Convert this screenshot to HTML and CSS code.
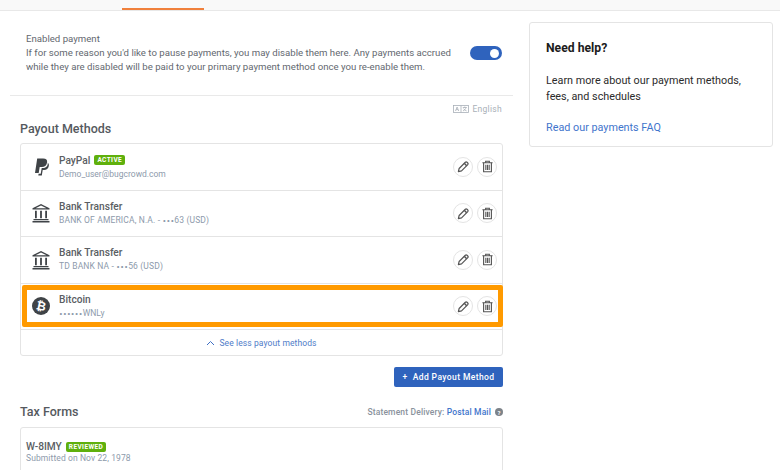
FILE: index.html
```html
<!DOCTYPE html>
<html lang="en">
<head>
  <meta charset="UTF-8">
  <title>Payments</title>
  <link rel="stylesheet" href="styles.css">
</head>
<body>
  <div class="tabs"><span class="tab-active"></span></div>
  <div class="page">
    <main class="main">
      <section class="enable">
        <div class="enable-text">
          <div>Enabled payment</div>
          <p>If for some reason you'd like to pause payments, you may disable them here. Any payments accrued while they are disabled will be paid to your primary payment method once you re-enable them.</p>
        </div>
        <div class="toggle"><span class="knob"></span></div>
      </section>

      <div class="lang">
        <svg width="16" height="8" viewBox="0 0 16 8" fill="none" stroke="#a9b0b8" stroke-width="0.8"><rect x="0.5" y="0.5" width="15" height="7"/><path d="M8 0.5v7M2.5 6l1.6-4 1.6 4M3.2 4.6h1.8M9.8 2.5h4M11.8 1.5v1M13 2.5c-.4 1.6-1.5 2.8-3 3.4M10.6 3.6c.6 1 1.6 1.9 3 2.3"/></svg>
        English
      </div>
      <h2 class="section-title">Payout Methods</h2>

      <div class="card">
        <div class="row">
          <svg class="row-icon" width="24" height="24" viewBox="0 0 24 24" fill="#3f4347"><path d="M8.200 3.500h6c2.900 0 4.400 1.500 3.900 4.100-.5 3-2.600 4.500-5.200 4.500h-2.200l-1 5.800H6z"/><path d="M18.800 7.800c1 .8 1.300 1.900 1 3.300-.5 2.600-2.300 4-4.700 4h-1.400l-.9 5.400H9.300l.3-1.700h2.100l1-5.700h1.300c2.700 0 4.900-1.600 4.800-5.300z"/></svg>
          <div class="row-text">
            <div class="row-name">PayPal <span class="badge">ACTIVE</span></div>
            <div class="row-sub">Demo_user@bugcrowd.com</div>
          </div>
          <div class="actions">
            <button class="circle"><svg width="13" height="13" viewBox="0 0 14 14"><use href="#pencil"/></svg></button>
            <button class="circle"><svg width="13" height="13" viewBox="0 0 14 14"><use href="#trash"/></svg></button>
          </div>
        </div>
        <div class="row">
          <svg class="row-icon" width="24" height="24" viewBox="0 0 24 24"><use href="#bank"/></svg>
          <div class="row-text">
            <div class="row-name">Bank Transfer</div>
            <div class="row-sub row-sub-caps">BANK OF AMERICA, N.A. - <span class="dots">•••</span>63 (USD)</div>
          </div>
          <div class="actions">
            <button class="circle"><svg width="13" height="13" viewBox="0 0 14 14"><use href="#pencil"/></svg></button>
            <button class="circle"><svg width="13" height="13" viewBox="0 0 14 14"><use href="#trash"/></svg></button>
          </div>
        </div>
        <div class="row">
          <svg class="row-icon" width="24" height="24" viewBox="0 0 24 24"><use href="#bank"/></svg>
          <div class="row-text">
            <div class="row-name">Bank Transfer</div>
            <div class="row-sub row-sub-caps">TD BANK NA - <span class="dots">•••</span>56 (USD)</div>
          </div>
          <div class="actions">
            <button class="circle"><svg width="13" height="13" viewBox="0 0 14 14"><use href="#pencil"/></svg></button>
            <button class="circle"><svg width="13" height="13" viewBox="0 0 14 14"><use href="#trash"/></svg></button>
          </div>
        </div>
        <div class="row row-marked">
          <svg class="row-icon" width="24" height="24" viewBox="0 0 24 24">
            <circle cx="12" cy="12" r="9" fill="#3f4347"/>
            <text x="12" y="16" class="btc" transform="rotate(12 12 12)">₿</text>
          </svg>
          <div class="row-text">
            <div class="row-name">Bitcoin</div>
            <div class="row-sub"><span class="dots">••••••</span>WNLy</div>
          </div>
          <div class="actions">
            <button class="circle"><svg width="13" height="13" viewBox="0 0 14 14"><use href="#pencil"/></svg></button>
            <button class="circle"><svg width="13" height="13" viewBox="0 0 14 14"><use href="#trash"/></svg></button>
          </div>
        </div>
        <a class="see-less" href="#">
          <svg width="9" height="6" viewBox="0 0 9 6" fill="none" stroke="#3f6fc4" stroke-width="1"><path d="M1 5l3.500-3.500L8 5"/></svg>
          See less payout methods
        </a>
      </div>

      <div class="add-wrap">
        <button class="add-btn">+&nbsp; Add Payout Method</button>
      </div>

      <div class="tax-head">
        <h2 class="section-title">Tax Forms</h2>
        <div class="delivery">
          <span>Statement Delivery: <a href="#">Postal Mail</a></span>
          <span class="help">?</span>
        </div>
      </div>
      <div class="card tax-card">
        <div class="row-name tax-name">W-8IMY <span class="badge">REVIEWED</span></div>
        <div class="row-sub tax-sub">Submitted on Nov 22, 1978</div>
      </div>
    </main>

    <aside class="help-card">
      <h3>Need help?</h3>
      <p>Learn more about our payment methods, fees, and schedules</p>
      <a href="#">Read our payments FAQ</a>
    </aside>
  </div>

  <svg class="defs" width="0" height="0">
    <defs>
      <g id="pencil" fill="none" stroke="#555" stroke-width="1.300" stroke-linejoin="round">
        <path d="M1.500 12.500l.8-3.400 6.700-6.700a1.300 1.300 0 0 1 1.800 0l.8.800a1.300 1.300 0 0 1 0 1.800L4.900 11.700z"/>
        <path d="M7.800 3.600l2.600 2.600" stroke-width="1.600"/>
      </g>
      <g id="trash" fill="none" stroke="#555" stroke-width="1.200">
        <path d="M1.500 3h11M5 3V1.300h4V3"/>
        <path d="M2.800 3v9.700h8.400V3"/>
        <path d="M5.200 5v5.800M7 5v5.800M8.800 5v5.800"/>
      </g>
      <g id="bank" fill="#3f4347">
        <path d="M12 3L20.500 7.300v1.200h-17V7.300zM12 4.600L6.500 7.300h11z" fill-rule="evenodd"/>
        <path d="M6 9.800h1.800v7.400H6zM11.100 9.800h1.800v7.400h-1.800zM16.200 9.800H18v7.400h-1.800z"/>
        <path d="M4.500 18h15v1.200h-15zM3.500 20h17v1.400h-17z"/>
      </g>
    </defs>
  </svg>
</body>
</html>
```

FILE: styles.css
```css
* {
  box-sizing: border-box;
}
html, body {
  height: 470px;
  overflow: hidden;
}
body {
  margin: 0;
  background: #fff;
  font-family: Roboto, "Liberation Sans", sans-serif;
  color: #63686f;
}
a {
  color: #3f75cc;
  text-decoration: none;
}
.defs {
  position: absolute;
}
.tabs {
  height: 11px;
  padding-top: 8px;
  background: #f9f9f9;
  border-bottom: 1px solid #e8e8e8;
}
.tab-active {
  display: block;
  width: 82px;
  height: 2px;
  margin-left: 122px;
  background: #f0803c;
}
.page {
  display: flex;
  align-items: flex-start;
  padding-left: 10px;
}
.main {
  width: 503px;
}
.enable {
  display: flex;
  align-items: center;
  justify-content: space-between;
  height: 85px;
  padding: 0 11px 0 16px;
  border-bottom: 1px solid #e9e9e9;
  font-size: 9.650px;
  line-height: 14px;
}
.enable-text {
  width: 440px;
}
.enable-text p {
  margin: 0;
}
.toggle {
  display: flex;
  justify-content: flex-end;
  align-items: center;
  width: 32px;
  height: 14px;
  padding-right: 3px;
  border-radius: 7px;
  background: #2f63bd;
}
.knob {
  width: 9px;
  height: 9px;
  border-radius: 50%;
  background: #fff;
}
.lang {
  display: flex;
  align-items: center;
  justify-content: flex-end;
  gap: 3px;
  height: 13px;
  margin-top: 6px;
  padding-right: 11px;
  font-size: 8.500px;
  letter-spacing: 0.3px;
  color: #a9b0b8;
}
.section-title {
  margin: 0;
  font-size: 12.500px;
  font-weight: 500;
  line-height: 16px;
  color: #55595e;
}
.main > .section-title {
  margin: 6px 0 6px 10px;
}
.card {
  width: 483px;
  margin-left: 10px;
  border: 1px solid #e4e4e4;
  border-radius: 3px;
  background: #fff;
}
.row {
  display: flex;
  align-items: center;
  height: 46.500px;
  padding: 0 5px 0 8px;
  border-bottom: 1px solid #e4e4e4;
}
.row-marked {
  position: relative;
}
.row-marked::after {
  content: "";
  position: absolute;
  inset: 1px -1px 2px 1px;
  border: 5px solid #ff9a00;
  border-radius: 2px;
  pointer-events: none;
}
.row-icon {
  flex: none;
}
.row-text {
  flex: 1;
  margin-left: 6px;
}
.row-name {
  display: flex;
  align-items: center;
  gap: 4px;
  font-size: 10.200px;
  font-weight: 500;
  line-height: 13px;
  color: #5a5e63;
}
.row-sub {
  margin-top: 1px;
  font-size: 8.500px;
  line-height: 12px;
  color: #8d9aab;
}
.row-sub-caps {
  letter-spacing: 0.15px;
}
.dots {
  font-family: Inter, sans-serif;
  font-size: 6.500px;
  letter-spacing: 0.3px;
}
.btc {
  font-family: "DejaVu Sans", sans-serif;
  font-size: 12px;
  font-weight: 700;
  text-anchor: middle;
  fill: #fff;
}
.badge {
  padding: 0 3px;
  border-radius: 2px;
  background: #5fb00c;
  color: #fff;
  font-size: 6.500px;
  font-weight: 700;
  line-height: 10px;
  letter-spacing: 0.4px;
}
.actions {
  display: flex;
  gap: 4px;
}
.circle {
  display: flex;
  align-items: center;
  justify-content: center;
  width: 20px;
  height: 20px;
  padding: 0;
  border: 1px solid #e4e4e4;
  border-radius: 50%;
  background: #fff;
}
.see-less {
  display: flex;
  align-items: center;
  justify-content: center;
  gap: 4px;
  height: 25px;
  font-size: 8.500px;
  letter-spacing: 0.1px;
  color: #4f7cc8;
}
.add-wrap {
  display: flex;
  justify-content: flex-end;
  margin-top: 11px;
  padding-right: 10px;
}
.add-btn {
  width: 109px;
  height: 20px;
  padding: 0;
  border: 0;
  border-radius: 2px;
  background: #2f63bd;
  color: #fff;
  font-family: inherit;
  font-size: 8.500px;
  font-weight: 500;
  letter-spacing: 0.4px;
}
.tax-head {
  display: flex;
  align-items: center;
  justify-content: space-between;
  margin: 17px 10px 7px 10px;
}
.delivery {
  display: flex;
  align-items: center;
  gap: 4px;
  font-size: 8.500px;
  font-weight: 500;
  letter-spacing: 0.15px;
  color: #8a929c;
}
.help {
  display: flex;
  align-items: center;
  justify-content: center;
  width: 8px;
  height: 8px;
  border-radius: 50%;
  background: #7d8389;
  color: #fff;
  font-size: 6px;
  font-weight: 700;
  letter-spacing: 0;
}
.tax-card {
  height: 80px;
  padding: 12px 5px;
}
.tax-sub {
  margin-top: 0;
  line-height: 11px;
  letter-spacing: 0.1px;
}
.help-card {
  width: 244px;
  height: 125px;
  margin: 11px 0 0 16px;
  padding: 17px 16px;
  border: 1px solid #e4e4e4;
  border-radius: 3px;
  font-size: 10.800px;
  line-height: 16px;
  color: #2b2b2b;
}
.help-card h3 {
  margin: 0 0 17px;
  font-size: 12.200px;
  font-weight: 700;
  line-height: 16px;
  color: #1c1c1c;
}
.help-card p {
  margin: 0 0 15px;
}
```
